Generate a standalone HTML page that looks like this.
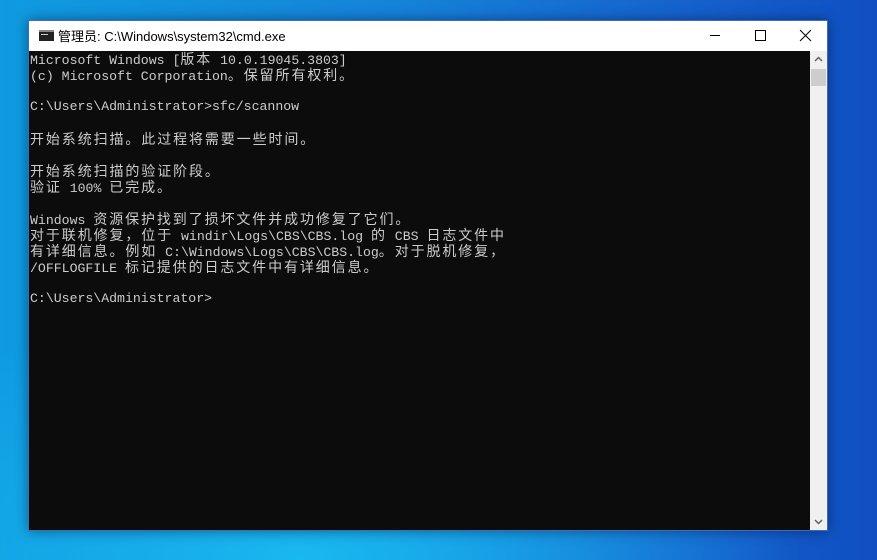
<!DOCTYPE html>
<html><head><meta charset="utf-8"><style>
*{margin:0;padding:0;box-sizing:border-box}
body{width:877px;height:560px;overflow:hidden;position:relative;
background:radial-gradient(ellipse 500px 260px at 300px 560px,#19b8f0 0%,rgba(25,184,240,0) 100%),linear-gradient(90deg,#0f9be0 0%,#1583d8 45%,#1560cc 80%,#0f4fc2 100%)}
.win{position:absolute;left:28px;top:20px;width:800px;height:511px;background:#0c0c0c;box-shadow:0 0 12px rgba(0,0,40,.45);border:1px solid #3a6fb0}
.title{position:absolute;left:0;top:0;width:100%;height:30px;background:#fff;font:13px "Liberation Sans","Noto Sans CJK SC",sans-serif;color:#000}
.title .t{position:absolute;left:29px;top:5px}
.icon{position:absolute;left:10px;top:9px;width:15px;height:11px;background:#222;border-top:2px solid #888}
.icon:after{content:"";position:absolute;left:2px;top:2px;width:7px;height:3px;border-top:1px solid #ccc}
.btn{position:absolute;top:0;height:30px;width:46px}
.sb{position:absolute;right:0;top:30px;width:17px;height:479px;background:#f0f0f0}
.thumb{position:absolute;left:1px;top:18px;width:15px;height:17px;background:#cdcdcd}
.con{position:absolute;left:1px;top:30px;color:#ccc;font:13.2px/16px "Liberation Mono","Noto Sans CJK SC",monospace;white-space:pre}
.l{position:absolute;left:0;height:16px}
.c{font-family:"Noto Sans CJK SC",sans-serif;font-size:14px;letter-spacing:1.9px}
</style></head><body>
<div class="win">
<div class="title"><div class="icon"></div><span class="t">管理员: C:\Windows\system32\cmd.exe</span>
<svg class="btn" style="left:663px" viewBox="0 0 46 30"><path d="M18 14.5h10" stroke="#000"/></svg>
<svg class="btn" style="left:708px" viewBox="0 0 46 30"><rect x="18.5" y="9.5" width="10" height="10" fill="none" stroke="#000"/></svg>
<svg class="btn" style="left:753px" viewBox="0 0 46 30"><path d="M18 9l11 11M29 9L18 20" stroke="#000"/></svg>
</div>
<div class="sb"><svg width="17" height="17"><path d="M5 10l3.5-3.5L12 10" stroke="#606060" stroke-width="1.5" fill="none"/></svg><div class="thumb"></div>
<svg style="position:absolute;left:0;bottom:0" width="17" height="17"><path d="M5 7l3.5 3.5L12 7" stroke="#606060" stroke-width="1.5" fill="none"/></svg></div>
<div class="con">
<div class="l" style="top:0">Microsoft Windows [<span class="c">版本</span> 10.0.19045.3803]</div>
<div class="l" style="top:16px">(c) Microsoft Corporation<span class="c">。保留所有权利。</span></div>
<div class="l" style="top:48px">C:\Users\Administrator&gt;sfc/scannow</div>
<div class="l" style="top:80px"><span class="c">开始系统扫描。此过程将需要一些时间。</span></div>
<div class="l" style="top:112px"><span class="c">开始系统扫描的验证阶段。</span></div>
<div class="l" style="top:128px"><span class="c">验证</span> 100% <span class="c">已完成。</span></div>
<div class="l" style="top:160px">Windows <span class="c">资源保护找到了损坏文件并成功修复了它们。</span></div>
<div class="l" style="top:176px"><span class="c">对于联机修复，位于</span> windir\Logs\CBS\CBS.log <span class="c">的</span> CBS <span class="c">日志文件中</span></div>
<div class="l" style="top:192px"><span class="c">有详细信息。例如</span> C:\Windows\Logs\CBS\CBS.log<span class="c">。对于脱机修复，</span></div>
<div class="l" style="top:208px">/OFFLOGFILE <span class="c">标记提供的日志文件中有详细信息。</span></div>
<div class="l" style="top:240px">C:\Users\Administrator&gt;</div>
</div>
</div>
</body></html>
